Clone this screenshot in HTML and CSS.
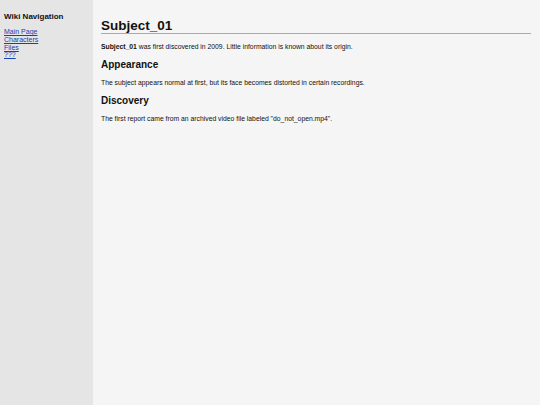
FILE: index.html
```html
<!DOCTYPE html>
<html>
<head>
<meta charset="utf-8">
<link rel="stylesheet" href="styles.css">
</head>
<body>
<div class="layout">
  <nav class="sidebar">
    <h2 class="nav-title">Wiki Navigation</h2>
    <ul class="nav-list">
      <li><a href="#">Main Page</a></li>
      <li><a href="#">Characters</a></li>
      <li><a href="#">Files</a></li>
      <li><a href="#">???</a></li>
    </ul>
  </nav>
  <main class="content">
    <h1 class="title">Subject_01</h1>
    <p class="text"><b>Subject_01</b> was first discovered in 2009. Little information is known about its origin.</p>
    <h2 class="section">Appearance</h2>
    <p class="text">The subject appears normal at first, but its face becomes distorted in certain recordings.</p>
    <h2 class="section">Discovery</h2>
    <p class="text">The first report came from an archived video file labeled "do_not_open.mp4".</p>
  </main>
</div>
</body>
</html>
```

FILE: styles.css
```css
html, body {
  margin: 0;
  padding: 0;
  height: 100%;
}
body {
  font-family: "Liberation Sans", Arial, sans-serif;
  color: #111;
  background: #f5f5f5;
}
.layout {
  display: flex;
  min-height: 405px;
}
.sidebar {
  width: 85px;
  flex: none;
  background: #e5e5e5;
  padding: 12px 4px;
}
.nav-title {
  font-size: 8px;
  line-height: 10px;
  font-weight: bold;
  margin: 0 0 6px 0;
}
.nav-list {
  list-style: none;
  margin: 0;
  padding: 0;
  font-size: 7px;
  line-height: 7.8px;
}
.nav-list a {
  color: #1a3fb0;
}
.content {
  flex: 1;
  padding: 18px 9px 0 8px;
}
.title {
  font-size: 13.5px;
  line-height: 15px;
  margin: 0 0 9px 0;
  padding: 0;
  border-bottom: 1px solid #aaa;
}
.text {
  font-size: 6.8px;
  line-height: 8px;
  margin: 0 0 8px 0;
}
.section {
  font-size: 10px;
  line-height: 12px;
  margin: 0 0 8px 0;
}
```
